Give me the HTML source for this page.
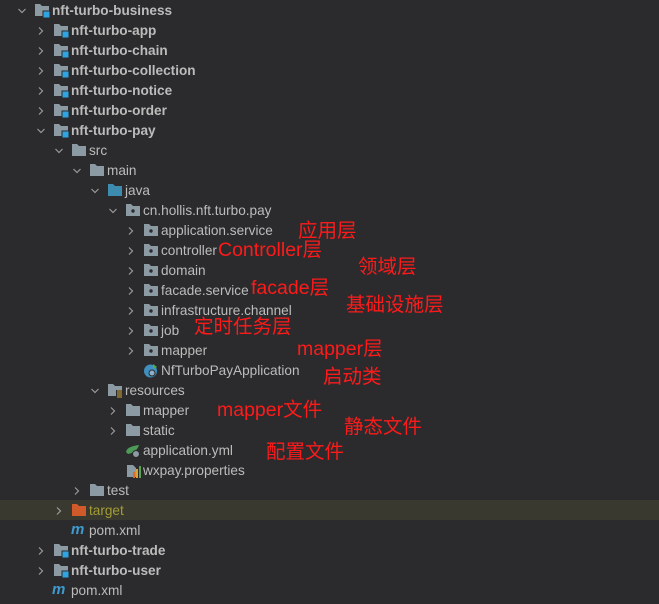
<!DOCTYPE html>
<html><head><meta charset="utf-8"><style>
body{margin:0;width:659px;height:604px;background:#2b2b2d;overflow:hidden;font-family:"Liberation Sans","Noto Sans CJK SC",sans-serif;}
.r{position:absolute;left:0;width:659px;height:20px;}
.t{position:absolute;top:3px;font-size:13.6px;color:#bcbcbc;line-height:16px;white-space:nowrap;}
.b{font-weight:bold;}
.c{position:absolute;top:7px;width:8px;height:8px;}
.i{position:absolute;top:3px;width:16px;height:15px;}
.a{position:absolute;color:#ff1a1a;font-size:19.5px;line-height:20px;white-space:nowrap;font-family:"Liberation Sans","Noto Sans CJK SC",sans-serif;}
</style></head><body>
<svg width="0" height="0" style="position:absolute">
<defs>
<symbol id="cd" viewBox="0 0 8 8"><polyline points="0.5,2 4,5.5 7.5,2" fill="none" stroke="#9a9a9a" stroke-width="1.2"/></symbol>
<symbol id="cr" viewBox="0 0 8 8"><polyline points="2,0.5 5.5,4 2,7.5" fill="none" stroke="#9a9a9a" stroke-width="1.2"/></symbol>
<symbol id="fm" viewBox="0 0 16 15"><path d="M1 1h5l2 2h7v10H1z" fill="#8c9aa3"/><rect x="9" y="8" width="7" height="7" fill="#2fa4e0" stroke="#2b2b2d" stroke-width="1"/></symbol>
<symbol id="fg" viewBox="0 0 16 15"><path d="M1 1h5l2 2h7v10H1z" fill="#8c9aa3"/></symbol>
<symbol id="fb" viewBox="0 0 16 15"><path d="M1 1h5l2 2h7v10H1z" fill="#3d8bb0"/></symbol>
<symbol id="fo" viewBox="0 0 16 15"><path d="M1 1h5l2 2h7v10H1z" fill="#d05a2a"/></symbol>
<symbol id="fp" viewBox="0 0 16 15"><path d="M1 1h5l2 2h7v10H1z" fill="#8c9aa3"/><circle cx="8" cy="8" r="1.7" fill="#2b2b2d"/></symbol>
<symbol id="fr" viewBox="0 0 16 15"><path d="M1 1h5l2 2h7v10H1z" fill="#8c9aa3"/><rect x="9" y="7" width="6" height="8" fill="#2b2b2d"/><path d="M10 8h5M10 10h5M10 12h5M10 14h5" stroke="#d4a437" stroke-width="1"/></symbol>
</defs></svg>

<div class="r" style="top:0"><svg class="c" style="left:18px"><use href="#cd"/></svg><svg class="i" style="left:34px"><use href="#fm"/></svg><span class="t b" style="left:52px">nft-turbo-business</span></div>
<div class="r" style="top:20px"><svg class="c" style="left:37px"><use href="#cr"/></svg><svg class="i" style="left:53px"><use href="#fm"/></svg><span class="t b" style="left:71px">nft-turbo-app</span></div>
<div class="r" style="top:40px"><svg class="c" style="left:37px"><use href="#cr"/></svg><svg class="i" style="left:53px"><use href="#fm"/></svg><span class="t b" style="left:71px">nft-turbo-chain</span></div>
<div class="r" style="top:60px"><svg class="c" style="left:37px"><use href="#cr"/></svg><svg class="i" style="left:53px"><use href="#fm"/></svg><span class="t b" style="left:71px">nft-turbo-collection</span></div>
<div class="r" style="top:80px"><svg class="c" style="left:37px"><use href="#cr"/></svg><svg class="i" style="left:53px"><use href="#fm"/></svg><span class="t b" style="left:71px">nft-turbo-notice</span></div>
<div class="r" style="top:100px"><svg class="c" style="left:37px"><use href="#cr"/></svg><svg class="i" style="left:53px"><use href="#fm"/></svg><span class="t b" style="left:71px">nft-turbo-order</span></div>
<div class="r" style="top:120px"><svg class="c" style="left:37px"><use href="#cd"/></svg><svg class="i" style="left:53px"><use href="#fm"/></svg><span class="t b" style="left:71px">nft-turbo-pay</span></div>
<div class="r" style="top:140px"><svg class="c" style="left:55px"><use href="#cd"/></svg><svg class="i" style="left:71px"><use href="#fg"/></svg><span class="t" style="left:89px">src</span></div>
<div class="r" style="top:160px"><svg class="c" style="left:73px"><use href="#cd"/></svg><svg class="i" style="left:89px"><use href="#fg"/></svg><span class="t" style="left:107px">main</span></div>
<div class="r" style="top:180px"><svg class="c" style="left:91px"><use href="#cd"/></svg><svg class="i" style="left:107px"><use href="#fb"/></svg><span class="t" style="left:125px">java</span></div>
<div class="r" style="top:200px"><svg class="c" style="left:109px"><use href="#cd"/></svg><svg class="i" style="left:125px"><use href="#fp"/></svg><span class="t" style="left:143px">cn.hollis.nft.turbo.pay</span></div>
<div class="r" style="top:220px"><svg class="c" style="left:127px"><use href="#cr"/></svg><svg class="i" style="left:143px"><use href="#fp"/></svg><span class="t" style="left:161px">application.service</span></div>
<div class="r" style="top:240px"><svg class="c" style="left:127px"><use href="#cr"/></svg><svg class="i" style="left:143px"><use href="#fp"/></svg><span class="t" style="left:161px">controller</span></div>
<div class="r" style="top:260px"><svg class="c" style="left:127px"><use href="#cr"/></svg><svg class="i" style="left:143px"><use href="#fp"/></svg><span class="t" style="left:161px">domain</span></div>
<div class="r" style="top:280px"><svg class="c" style="left:127px"><use href="#cr"/></svg><svg class="i" style="left:143px"><use href="#fp"/></svg><span class="t" style="left:161px">facade.service</span></div>
<div class="r" style="top:300px"><svg class="c" style="left:127px"><use href="#cr"/></svg><svg class="i" style="left:143px"><use href="#fp"/></svg><span class="t" style="left:161px">infrastructure.channel</span></div>
<div class="r" style="top:320px"><svg class="c" style="left:127px"><use href="#cr"/></svg><svg class="i" style="left:143px"><use href="#fp"/></svg><span class="t" style="left:161px">job</span></div>
<div class="r" style="top:340px"><svg class="c" style="left:127px"><use href="#cr"/></svg><svg class="i" style="left:143px"><use href="#fp"/></svg><span class="t" style="left:161px">mapper</span></div>
<div class="r" style="top:360px"><svg class="i" style="left:143px" viewBox="0 0 16 15"><circle cx="7.5" cy="8" r="6.5" fill="#3f8fc0"/><circle cx="9" cy="10" r="3" fill="#8cb0c8" stroke="#2b2b2d"/><path d="M10 1l4 3-4 2z" fill="#4cb050"/></svg><span class="t" style="left:161px">NfTurboPayApplication</span></div>
<div class="r" style="top:380px"><svg class="c" style="left:91px"><use href="#cd"/></svg><svg class="i" style="left:107px"><use href="#fr"/></svg><span class="t" style="left:125px">resources</span></div>
<div class="r" style="top:400px"><svg class="c" style="left:109px"><use href="#cr"/></svg><svg class="i" style="left:125px"><use href="#fg"/></svg><span class="t" style="left:143px">mapper</span></div>
<div class="r" style="top:420px"><svg class="c" style="left:109px"><use href="#cr"/></svg><svg class="i" style="left:125px"><use href="#fg"/></svg><span class="t" style="left:143px">static</span></div>
<div class="r" style="top:440px"><svg class="i" style="left:125px" viewBox="0 0 16 15"><path d="M1 9C2 4 8 3 14 2 12 8 8 10 3 11z" fill="#4c9a58"/><circle cx="11" cy="11" r="3.5" fill="#8b9aa4" stroke="#2b2b2d"/></svg><span class="t" style="left:143px">application.yml</span></div>
<div class="r" style="top:460px"><svg class="i" style="left:125px" viewBox="0 0 16 15"><path d="M2 2h6l3 3v9H2z" fill="#8c9aa3"/><rect x="8" y="9" width="2" height="6" fill="#e06a2a"/><rect x="11" y="6" width="2" height="9" fill="#d6a23a"/><rect x="14" y="3" width="2" height="12" fill="#59a14f"/></svg><span class="t" style="left:143px">wxpay.properties</span></div>
<div class="r" style="top:480px"><svg class="c" style="left:73px"><use href="#cr"/></svg><svg class="i" style="left:89px"><use href="#fg"/></svg><span class="t" style="left:107px">test</span></div>
<div class="r" style="top:500px;background:#3a3930"><svg class="c" style="left:55px"><use href="#cr"/></svg><svg class="i" style="left:71px"><use href="#fo"/></svg><span class="t" style="left:89px;color:#a39d34">target</span></div>
<div class="r" style="top:520px"><span class="t" style="left:71px;color:#3d9bd0;font-style:italic;font-weight:bold;font-size:15px;top:2px">m</span><span class="t" style="left:89px">pom.xml</span></div>
<div class="r" style="top:540px"><svg class="c" style="left:37px"><use href="#cr"/></svg><svg class="i" style="left:53px"><use href="#fm"/></svg><span class="t b" style="left:71px">nft-turbo-trade</span></div>
<div class="r" style="top:560px"><svg class="c" style="left:37px"><use href="#cr"/></svg><svg class="i" style="left:53px"><use href="#fm"/></svg><span class="t b" style="left:71px">nft-turbo-user</span></div>
<div class="r" style="top:580px"><span class="t" style="left:52px;color:#3d9bd0;font-style:italic;font-weight:bold;font-size:15px;top:2px">m</span><span class="t" style="left:71px">pom.xml</span></div>

<div class="a" style="left:298px;top:221px">应用层</div>
<div class="a" style="left:218px;top:240px">Controller层</div>
<div class="a" style="left:358px;top:257px">领域层</div>
<div class="a" style="left:251px;top:278px">facade层</div>
<div class="a" style="left:346px;top:295px">基础设施层</div>
<div class="a" style="left:194px;top:317px">定时任务层</div>
<div class="a" style="left:297px;top:339px">mapper层</div>
<div class="a" style="left:323px;top:367px">启动类</div>
<div class="a" style="left:217px;top:400px">mapper文件</div>
<div class="a" style="left:344px;top:417px">静态文件</div>
<div class="a" style="left:266px;top:442px">配置文件</div>
</body></html>
